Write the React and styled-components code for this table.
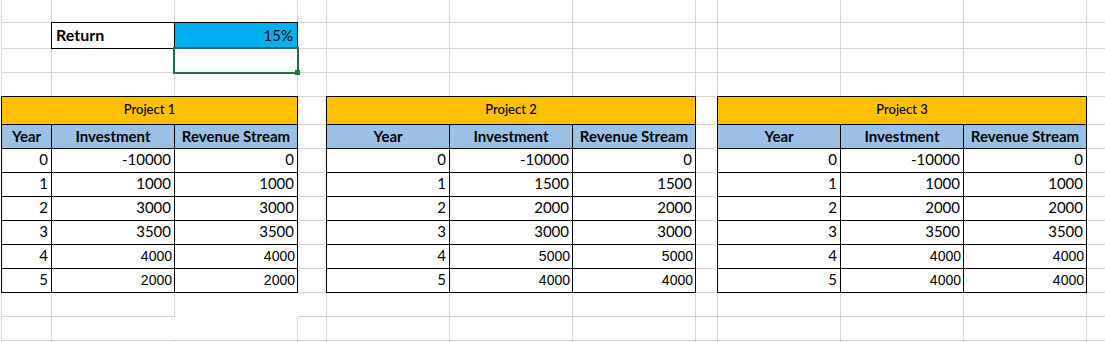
import React from 'react';
import styled, { createGlobalStyle } from 'styled-components';

const COLS = [50, 123, 123, 29, 123, 123, 123, 22, 123, 123, 123, 40];
const ROWS = [23, 26, 24, 24, 28, 24, 24, 24, 24, 24, 24, 24, 24, 24, 10];
const GRID = '#d4d4d4';
const CALIBRI = 'Lato, "Open Sans", sans-serif';
const ARIAL = '"Liberation Sans", Arial, sans-serif';

const Global = createGlobalStyle`
  html, body { margin: 0; padding: 0; background: #fff; overflow: hidden; }
  body { font-family: ${CALIBRI}; color: #000; }
`;

const Sheet = styled.div`
  display: grid;
  grid-template-columns: ${COLS.map((w) => `${w}px`).join(' ')};
  grid-template-rows: ${ROWS.map((h) => `${h}px`).join(' ')};
  width: max-content;
  margin-left: 1px;
  border-left: 1px solid ${GRID};
`;

const GridCell = styled.div`
  grid-row: ${(p) => p.$r + 1};
  grid-column: ${(p) => p.$c + 1};
  box-sizing: border-box;
  border-right: 1px solid ${(p) => (p.$noRight ? 'transparent' : GRID)};
  border-bottom: 1px solid ${(p) => (p.$noBottom ? 'transparent' : GRID)};
`;

const InputCell = styled.div`
  grid-row: 2;
  grid-column: ${(p) => p.$c};
  margin: -1px 0 0 -1px;
  box-sizing: border-box;
  border: 1px solid #000;
  background: ${(p) => p.$bg};
  z-index: 1;
  display: flex;
  align-items: flex-end;
  justify-content: ${(p) => (p.$right ? 'flex-end' : 'flex-start')};
  padding: 0 4px 4px 4px;
  font-size: ${(p) => (p.$bold ? '16px' : '15px')};
  line-height: 18px;
  font-weight: ${(p) => (p.$bold ? 700 : 400)};
  white-space: nowrap;
`;

const Selection = styled.div`
  grid-row: 3;
  grid-column: 3;
  margin: -2px -1px -1px -2px;
  box-sizing: border-box;
  border: 2px solid #217346;
  position: relative;
  z-index: 2;
`;

const Handle = styled.span`
  position: absolute;
  right: -3px;
  bottom: -3px;
  width: 5px;
  height: 5px;
  background: #217346;
`;

const Table = styled.div`
  grid-row: 5 / span 8;
  grid-column: ${(p) => p.$c} / span 3;
  margin: -1px 0 0 -1px;
  border-top: 1px solid #000;
  border-left: 1px solid #000;
  display: grid;
  grid-template-columns: ${(p) => p.$cols};
  grid-template-rows: 28px repeat(7, 24px);
  background: #fff;
  z-index: 1;
`;

const TCell = styled.div`
  box-sizing: border-box;
  border-right: 1px solid #000;
  border-bottom: 1px solid #000;
  display: flex;
  white-space: nowrap;
  overflow: hidden;
`;

const TitleCell = styled(TCell)`
  grid-column: 1 / -1;
  background: #ffc000;
  align-items: center;
  justify-content: center;
  font-size: 13px;
  font-weight: 500;
  padding-bottom: 3px;
`;

const HeadCell = styled(TCell)`
  background: #9bc2e6;
  align-items: flex-end;
  justify-content: center;
  font-size: 15px;
  line-height: 18px;
  font-weight: 700;
  padding-bottom: 3px;
`;

const DataCell = styled(TCell)`
  align-items: flex-end;
  justify-content: flex-end;
  font-family: ${(p) => (p.$alt ? ARIAL : CALIBRI)};
  font-size: ${(p) => (p.$alt ? '14px' : '15px')};
  line-height: 18px;
  padding: 0 ${(p) => (p.$alt ? '2px' : '3px')} ${(p) => (p.$alt ? '3px' : '4px')} 0;
`;

const PROJECTS = [
  {
    title: 'Project 1',
    col: 1,
    cols: '50px 123px 123px',
    rows: [[-10000, 0], [1000, 1000], [3000, 3000], [3500, 3500], [4000, 4000], [2000, 2000]],
  },
  {
    title: 'Project 2',
    col: 5,
    cols: '123px 123px 123px',
    rows: [[-10000, 0], [1500, 1500], [2000, 2000], [3000, 3000], [5000, 5000], [4000, 4000]],
  },
  {
    title: 'Project 3',
    col: 9,
    cols: '123px 123px 123px',
    rows: [[-10000, 0], [1000, 1000], [2000, 2000], [3500, 3500], [4000, 4000], [4000, 4000]],
  },
];

const isCovered = (r, c) => {
  if (r >= 4 && r <= 11 && PROJECTS.some((p) => c >= p.col - 1 && c <= p.col + 1)) return true;
  if (r === 1 && (c === 1 || c === 2)) return true;
  return false;
};

function ProjectTable({ project }) {
  return (
    <Table $c={project.col} $cols={project.cols}>
      <TitleCell>{project.title}</TitleCell>
      <HeadCell>Year</HeadCell>
      <HeadCell>Investment</HeadCell>
      <HeadCell>Revenue Stream</HeadCell>
      {project.rows.map(([inv, rev], year) => (
        <React.Fragment key={year}>
          <DataCell>{year}</DataCell>
          <DataCell $alt={year >= 4}>{inv}</DataCell>
          <DataCell $alt={year >= 4}>{rev}</DataCell>
        </React.Fragment>
      ))}
    </Table>
  );
}

export default function App() {
  const cells = [];
  ROWS.forEach((_, r) => {
    COLS.forEach((__, c) => {
      if (isCovered(r, c)) return;
      const noRight = (r === 12 && c === 2) || (r === 13 && c === 1);
      const noBottom = r === 12 && c === 2;
      cells.push(<GridCell key={`${r}-${c}`} $r={r} $c={c} $noRight={noRight} $noBottom={noBottom} />);
    });
  });

  return (
    <>
      <Global />
      <Sheet>
        {cells}
        <InputCell $c={2} $bg="#fff" $bold>Return</InputCell>
        <InputCell $c={3} $bg="#00b0f0" $right>15%</InputCell>
        <Selection>
          <Handle />
        </Selection>
        {PROJECTS.map((p) => (
          <ProjectTable key={p.title} project={p} />
        ))}
      </Sheet>
    </>
  );
}
